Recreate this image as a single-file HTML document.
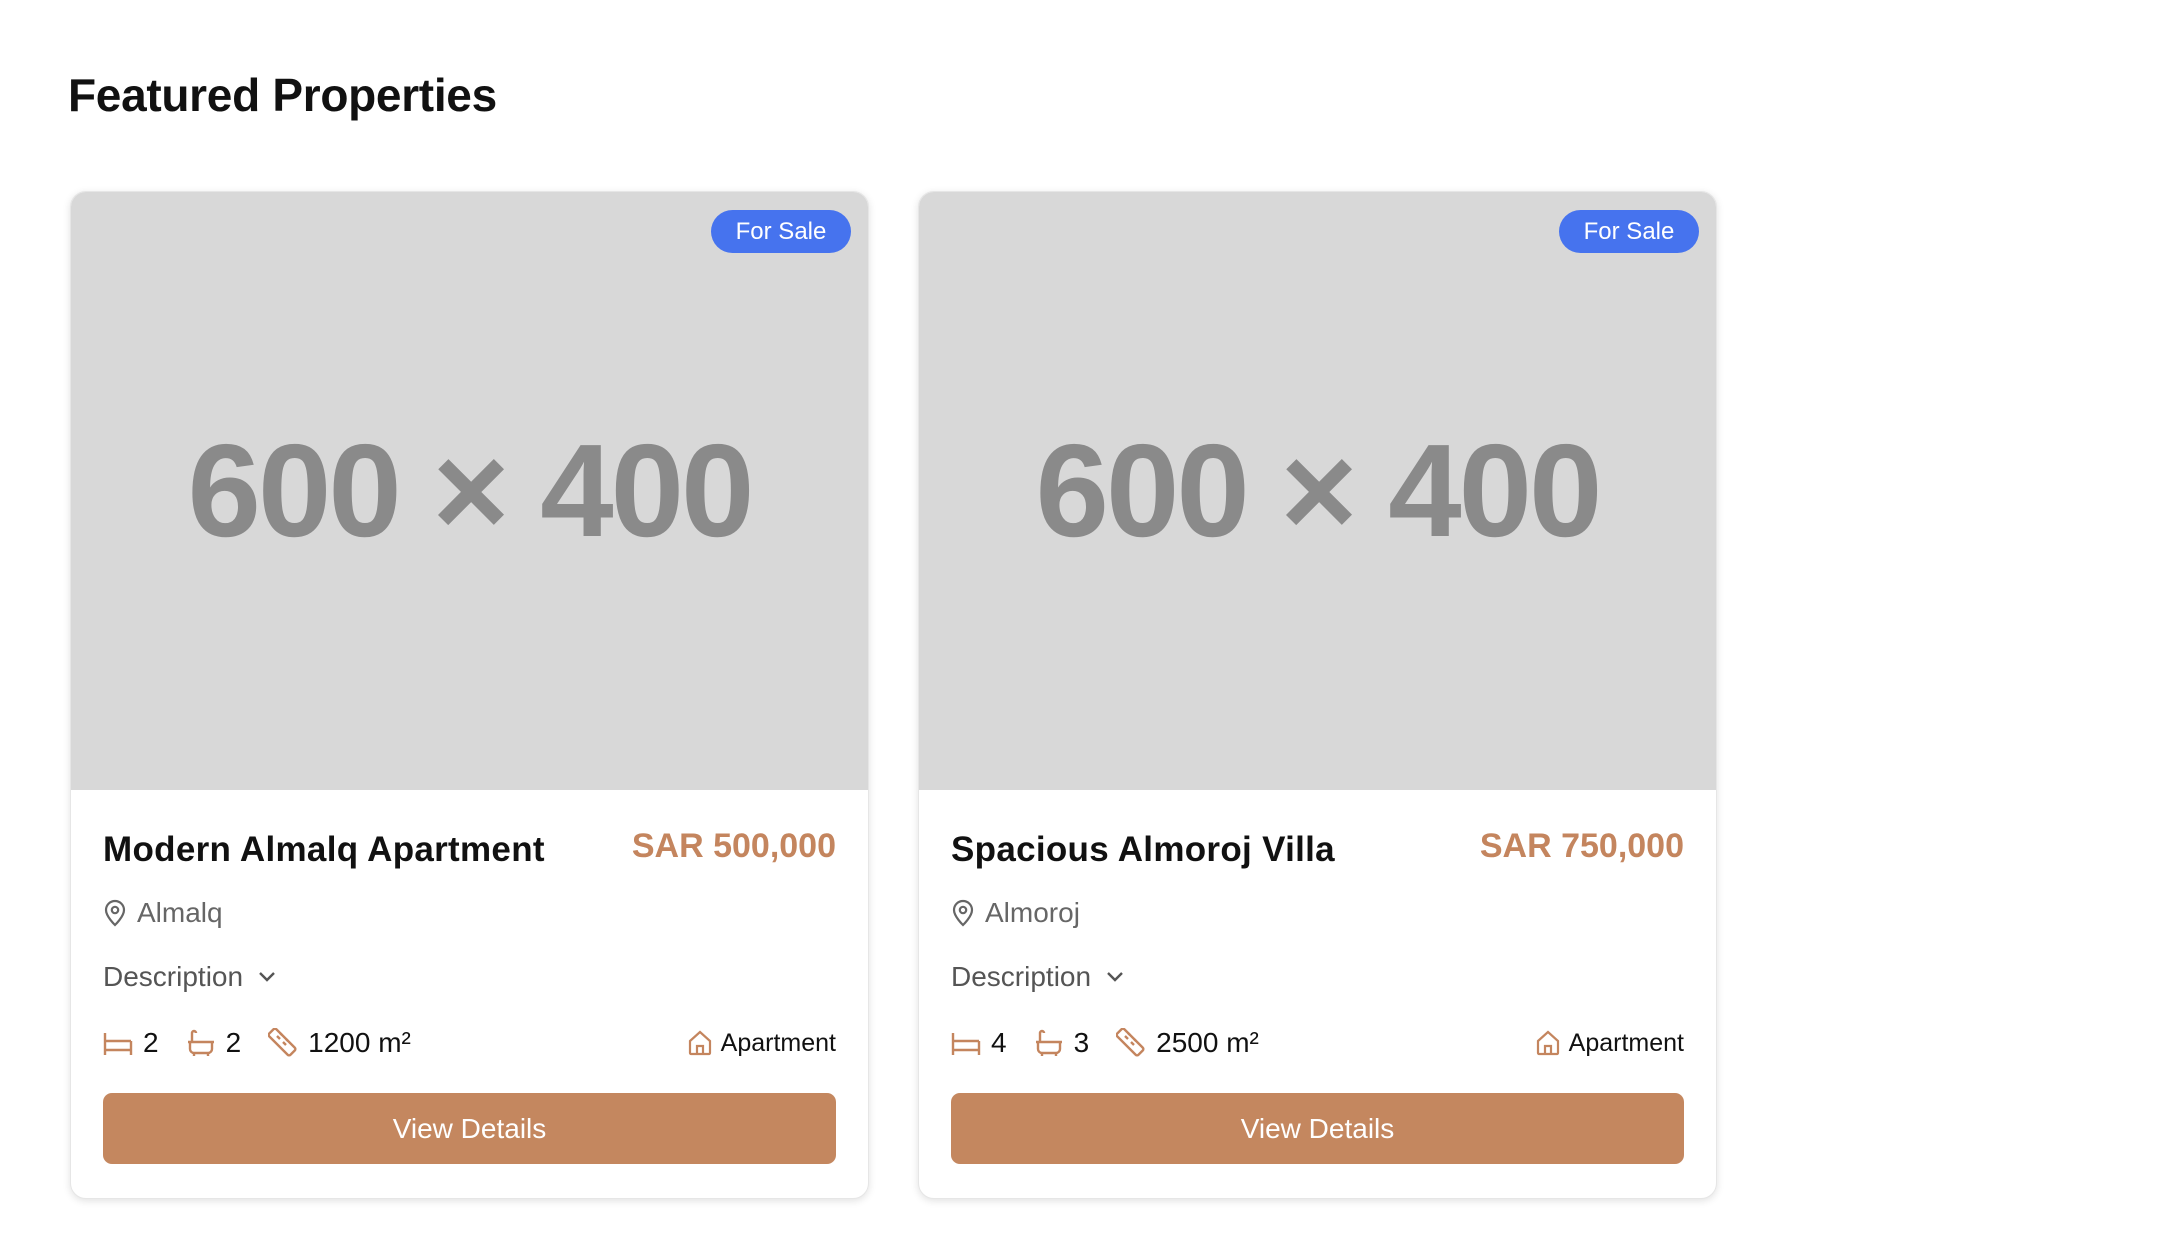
<!DOCTYPE html>
<html><head><meta charset="utf-8"><style>
*{box-sizing:border-box;margin:0;padding:0}
body{width:2184px;height:1242px;background:#fff;font-family:"Liberation Sans",sans-serif;position:relative;overflow:hidden}
h1{position:absolute;left:68px;top:68px;font-size:46px;font-weight:bold;color:#111;letter-spacing:-0.3px}
.card{position:absolute;top:191px;width:799px;height:1008px;border-radius:16px;background:#fff;box-shadow:0 2px 8px rgba(0,0,0,.12);border:1px solid #e6e6e6;overflow:hidden}
.img{position:absolute;left:0;top:0;width:100%;height:598px;background:#d8d8d8;color:#8a8a8a;font-size:132px;font-weight:bold;text-align:center;line-height:598px;letter-spacing:-3px}
.badge{position:absolute;right:17px;top:18px;width:140px;height:43px;border-radius:22px;background:#4673ee;color:#fff;font-size:24px;text-align:center;line-height:43px}
.t{position:absolute;left:32px;top:638px;font-size:35px;font-weight:bold;color:#111;letter-spacing:0.3px}
.p{position:absolute;right:32px;top:635px;font-size:34px;font-weight:bold;color:#c4855e}
.loc{position:absolute;left:32px;top:705px;font-size:28px;color:#666;display:flex;align-items:center;gap:10px}
.desc{position:absolute;left:32px;top:769px;font-size:28px;color:#555;display:flex;align-items:center;gap:14px}
.feat{position:absolute;left:32px;right:32px;top:833px;height:36px;font-size:28px;color:#111;display:flex;align-items:center}
.feat span{margin-right:27px}
.feat svg{margin-right:10px}
.typ{margin-left:auto;font-size:25px;display:flex;align-items:center;gap:8px}
.typ svg{margin-right:0!important}
.btn{position:absolute;left:32px;right:32px;top:901px;height:71px;border-radius:9px;background:#c4875f;color:#fff;font-size:28px;text-align:center;line-height:71px}
</style></head><body>
<h1>Featured Properties</h1>

<div class="card" style="left:70px">
<div class="img">600 × 400</div><div class="badge">For Sale</div>
<div class="t">Modern Almalq Apartment</div><div class="p">SAR 500,000</div>
<div class="loc"><svg width="24" height="28" viewBox="0 0 24 28" fill="none" stroke="#666" stroke-width="2.2"><path d="M12 26s9-8.5 9-15a9 9 0 0 0-18 0c0 6.5 9 15 9 15z"/><circle cx="12" cy="11" r="3.2"/></svg>Almalq</div>
<div class="desc">Description <svg width="20" height="14" viewBox="0 0 20 14" fill="none" stroke="#555" stroke-width="2.4"><path d="M3 3l7 7 7-7"/></svg></div>
<div class="feat">
<svg width="30" height="24" viewBox="0 0 30 24" fill="none" stroke="#c4855e" stroke-width="2.4"><path d="M2 2v22M28 10v14M2 10h26M2 19h26"/></svg><span>2</span>
<svg width="30" height="28" viewBox="0 0 30 28" fill="none" stroke="#c4855e" stroke-width="2.4"><path d="M2 13h26M4 13v7a4 4 0 0 0 4 4h14a4 4 0 0 0 4-4v-7M6 13V4a2 2 0 0 1 4 0M8 24v3M22 24v3"/></svg><span>2</span>
<svg width="30" height="30" viewBox="0 0 30 30" fill="none" stroke="#c4855e" stroke-width="2.4"><rect x="9" y="-1" width="10" height="30" rx="2" transform="rotate(-45 14 14)"/><path d="M9 8l3 3M12 5l2 2M15 14l3 3M18 11l2 2"/></svg><span>1200 m²</span>
<div class="typ"><svg width="26" height="26" viewBox="0 0 26 26" fill="none" stroke="#c4855e" stroke-width="2.2"><path d="M3 11L13 2l10 9v12a1 1 0 0 1-1 1H4a1 1 0 0 1-1-1z"/><path d="M10 24v-8h6v8"/></svg>Apartment</div>
</div>
<div class="btn">View Details</div>
</div>

<div class="card" style="left:918px">
<div class="img">600 × 400</div><div class="badge">For Sale</div>
<div class="t">Spacious Almoroj Villa</div><div class="p">SAR 750,000</div>
<div class="loc"><svg width="24" height="28" viewBox="0 0 24 28" fill="none" stroke="#666" stroke-width="2.2"><path d="M12 26s9-8.5 9-15a9 9 0 0 0-18 0c0 6.5 9 15 9 15z"/><circle cx="12" cy="11" r="3.2"/></svg>Almoroj</div>
<div class="desc">Description <svg width="20" height="14" viewBox="0 0 20 14" fill="none" stroke="#555" stroke-width="2.4"><path d="M3 3l7 7 7-7"/></svg></div>
<div class="feat">
<svg width="30" height="24" viewBox="0 0 30 24" fill="none" stroke="#c4855e" stroke-width="2.4"><path d="M2 2v22M28 10v14M2 10h26M2 19h26"/></svg><span>4</span>
<svg width="30" height="28" viewBox="0 0 30 28" fill="none" stroke="#c4855e" stroke-width="2.4"><path d="M2 13h26M4 13v7a4 4 0 0 0 4 4h14a4 4 0 0 0 4-4v-7M6 13V4a2 2 0 0 1 4 0M8 24v3M22 24v3"/></svg><span>3</span>
<svg width="30" height="30" viewBox="0 0 30 30" fill="none" stroke="#c4855e" stroke-width="2.4"><rect x="9" y="-1" width="10" height="30" rx="2" transform="rotate(-45 14 14)"/><path d="M9 8l3 3M12 5l2 2M15 14l3 3M18 11l2 2"/></svg><span>2500 m²</span>
<div class="typ"><svg width="26" height="26" viewBox="0 0 26 26" fill="none" stroke="#c4855e" stroke-width="2.2"><path d="M3 11L13 2l10 9v12a1 1 0 0 1-1 1H4a1 1 0 0 1-1-1z"/><path d="M10 24v-8h6v8"/></svg>Apartment</div>
</div>
<div class="btn">View Details</div>
</div>
</body></html>
